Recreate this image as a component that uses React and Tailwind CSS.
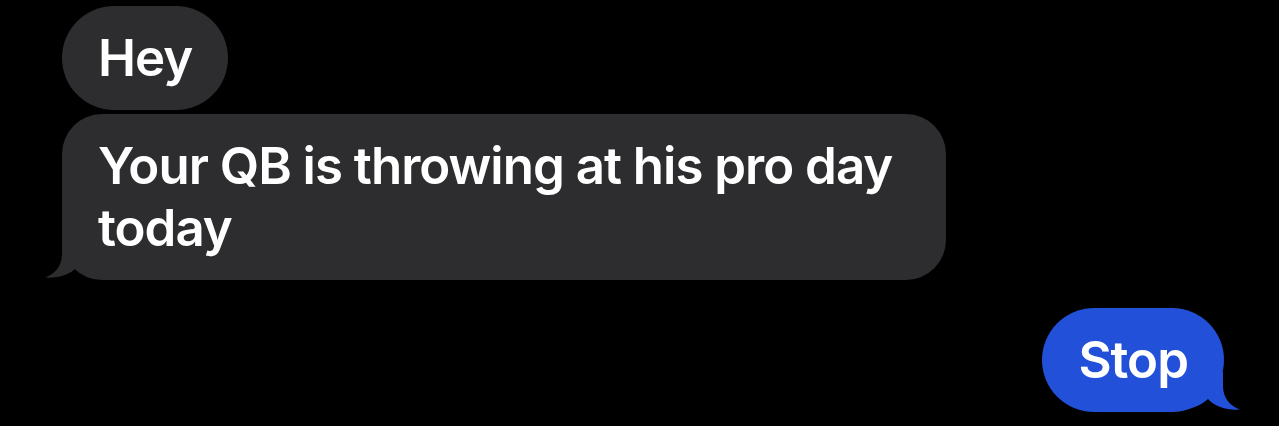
import React from "react";

// Little hook at the bottom corner of the last bubble in a run
function Tail({ side, color }) {
  const left = side === "left";
  return (
    <svg
      width="60"
      height="40"
      viewBox="0 0 60 40"
      className={`absolute bottom-0 ${left ? "left-[-17px]" : "right-[-16px] -scale-x-100"}`}
    >
      <path
        d="M17 0 L17 14 C17 26 10 34 0 37.5 C12 38.5 25 35 32 27 C41 35 50 37 60 37 L60 0 Z"
        fill={color}
      />
    </svg>
  );
}

function Bubble({ children, from, tail, className = "" }) {
  const mine = from === "me";
  const color = mine ? "#2250d8" : "#2d2d2f";
  return (
    <div
      className={`relative max-w-[884px] rounded-[40px] px-[36px] py-[21px] text-[51px] leading-[62px] font-semibold tracking-[-1px] text-white ${
        mine ? "bg-[#2250d8]" : "bg-[#2d2d2f]"
      } ${className}`}
    >
      {tail && <Tail side={mine ? "right" : "left"} color={color} />}
      <span className="relative">{children}</span>
    </div>
  );
}

export default function App() {
  return (
    <div
      className="h-[426px] w-full overflow-hidden bg-black"
      style={{ fontFamily: "Inter, 'Noto Sans', sans-serif" }}
    >
      <div className="flex flex-col items-start gap-[4px] pl-[62px] pt-[6px]">
        <Bubble from="them" className="rounded-[52px]">Hey</Bubble>
        <Bubble from="them" tail>
          Your QB is throwing at his pro day today
        </Bubble>
      </div>
      <div className="mt-[28px] flex justify-end pr-[55px]">
        <Bubble from="me" tail className="rounded-[52px]">Stop</Bubble>
      </div>
    </div>
  );
}
